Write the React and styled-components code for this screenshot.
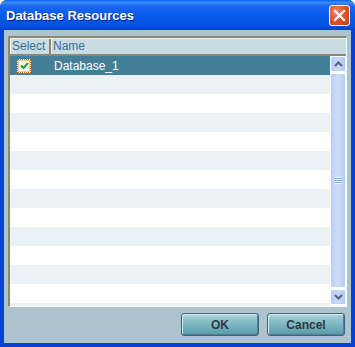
import styled, { createGlobalStyle } from "styled-components";

const Global = createGlobalStyle`
  html, body { margin: 0; padding: 0; }
  body { width: 355px; height: 347px; overflow: hidden; font-family: "Liberation Sans", Arial, sans-serif; }
`;

const Window = styled.div`
  width: 355px;
  height: 347px;
  box-sizing: border-box;
  display: flex;
  flex-direction: column;
  background: #0a3fd8;
  border-radius: 7px 7px 0 0;
  overflow: hidden;
`;

const TitleBar = styled.div`
  height: 30px;
  flex: none;
  display: flex;
  align-items: center;
  justify-content: space-between;
  padding: 0 5px 0 6px;
  background: linear-gradient(to bottom, #0a5ff0 0%, #3b8cf7 8%, #1c68ef 20%, #0558ea 55%, #0452e0 85%, #0340c8 100%);
`;

const Title = styled.span`
  color: #fff;
  font-weight: bold;
  font-size: 13px;
  text-shadow: 1px 1px #0a1e8a;
`;

const CloseButton = styled.div`
  width: 21px;
  height: 21px;
  box-sizing: border-box;
  border: 1px solid #fff;
  border-radius: 3px;
  background: radial-gradient(circle at 35% 30%, #f08a6a 0%, #e0552e 45%, #c3391a 100%);
  display: flex;
  align-items: center;
  justify-content: center;
`;

const Body = styled.div`
  flex: 1;
  margin: 0 4px 4px 4px;
  background: #adc4cf;
  display: flex;
  flex-direction: column;
  padding: 6px 4px 0 4px;
`;

const Table = styled.div`
  height: 271px;
  box-sizing: border-box;
  border-top: 2px solid #8b8775;
  border-left: 2px solid #8b8775;
  border-bottom: 1px solid #fff;
  border-right: 1px solid #fff;
  display: flex;
  flex-direction: column;
  background: #fff;
`;

const Header = styled.div`
  height: 15px;
  flex: none;
  display: flex;
  background: #c9dce4;
  border-bottom: 2px solid #8b8775;
  border-top: 1px solid #f4f1e6;
`;

const HeadCell = styled.div`
  width: ${(p) => p.$w || "auto"};
  flex: ${(p) => (p.$w ? "none" : 1)};
  box-sizing: border-box;
  border-left: 1px solid #f4f1e6;
  border-right: 2px solid ${(p) => (p.$w ? "#8b8775" : "transparent")};
  color: #3c6f8c;
  font-size: 12px;
  line-height: 15px;
  padding-left: 1px;
`;

const Content = styled.div`
  flex: 1;
  display: flex;
  overflow: hidden;
`;

const Rows = styled.div`
  flex: 1;
  display: flex;
  flex-direction: column;
`;

const Row = styled.div`
  height: 19px;
  flex: none;
  display: flex;
  align-items: center;
  background: ${(p) => (p.$selected ? "#447f98" : p.$odd ? "#eaf2f5" : "#ffffff")};
`;

const CheckCell = styled.div`
  width: 41px;
  box-sizing: border-box;
  display: flex;
  padding-left: 7px;
`;

const Check = styled.div`
  width: 14px;
  height: 14px;
  box-sizing: border-box;
  border: 1px dotted #d8640c;
  background: #fff;
  box-shadow: inset 0 0 0 1px #f8c88a;
  display: flex;
  align-items: center;
  justify-content: center;
`;

const NameCell = styled.div`
  color: #fff;
  font-size: 12px;
  padding-left: 3px;
`;

const Scrollbar = styled.div`
  width: 16px;
  flex: none;
  display: flex;
  flex-direction: column;
  background: #fff;
  padding: 0 0 1px 0;
  box-sizing: border-box;
`;

const Arrow = styled.div`
  height: 16px;
  flex: none;
  box-sizing: border-box;
  border: 1px solid #fff;
  border-radius: 2px;
  background: linear-gradient(to right, #b9cbf6, #c9d7fa 50%, #b5c7f3);
  display: flex;
  align-items: center;
  justify-content: center;
`;

const Thumb = styled.div`
  flex: 1;
  margin: 1px 0;
  box-sizing: border-box;
  border: 1px solid #fff;
  border-radius: 2px;
  background: linear-gradient(to right, #bccdf8, #cfdcfb 50%, #b8caf5);
  display: flex;
  align-items: center;
  justify-content: center;
`;

const Grip = styled.div`
  width: 7px;
  height: 7px;
  background: repeating-linear-gradient(to bottom, #eef3fe 0 1px, #8ea8e6 1px 2px);
`;

const Footer = styled.div`
  flex: 1;
  display: flex;
  justify-content: flex-end;
  align-items: center;
  gap: 8px;
  padding: 1px 2px 2px 0;
`;

const Button = styled.button`
  width: 78px;
  height: 23px;
  border: 1px solid #3f6274;
  border-radius: 3px;
  background: linear-gradient(to bottom, #b0d4dc 0%, #8cc0cb 30%, #6aa8b6 75%, #5a97a6 100%);
  box-shadow: inset 1px 1px 0 #d6ecf0, inset -1px -1px 0 #4a8494;
  color: #2d3a40;
  font-family: "Liberation Sans", Arial, sans-serif;
  font-weight: bold;
  font-size: 12px;
  padding: 0;
`;

const rows = Array.from({ length: 14 });

export default function App() {
  return (
    <>
      <Global />
      <Window>
        <TitleBar>
          <Title>Database Resources</Title>
          <CloseButton>
            <svg width="13" height="13" viewBox="0 0 13 13">
              <path d="M2 2 L11 11 M11 2 L2 11" stroke="#fff" strokeWidth="2.2" strokeLinecap="square" />
            </svg>
          </CloseButton>
        </TitleBar>
        <Body>
          <Table>
            <Header>
              <HeadCell $w="41px">Select</HeadCell>
              <HeadCell>Name</HeadCell>
            </Header>
            <Content>
              <Rows>
                {rows.map((_, i) => (
                  <Row key={i} $selected={i === 0} $odd={i % 2 === 1}>
                    {i === 0 && (
                      <>
                        <CheckCell>
                          <Check>
                            <svg width="9" height="9" viewBox="0 0 9 9">
                              <path d="M1 4.5 L3.5 7 L8 2" stroke="#21a121" strokeWidth="2" fill="none" />
                            </svg>
                          </Check>
                        </CheckCell>
                        <NameCell>Database_1</NameCell>
                      </>
                    )}
                  </Row>
                ))}
              </Rows>
              <Scrollbar>
                <Arrow>
                  <svg width="9" height="6" viewBox="0 0 9 6">
                    <path d="M1 5 L4.5 1.5 L8 5" stroke="#4d6185" strokeWidth="2" fill="none" />
                  </svg>
                </Arrow>
                <Thumb>
                  <Grip />
                </Thumb>
                <Arrow>
                  <svg width="9" height="6" viewBox="0 0 9 6">
                    <path d="M1 1 L4.5 4.5 L8 1" stroke="#4d6185" strokeWidth="2" fill="none" />
                  </svg>
                </Arrow>
              </Scrollbar>
            </Content>
          </Table>
          <Footer>
            <Button>OK</Button>
            <Button>Cancel</Button>
          </Footer>
        </Body>
      </Window>
    </>
  );
}
